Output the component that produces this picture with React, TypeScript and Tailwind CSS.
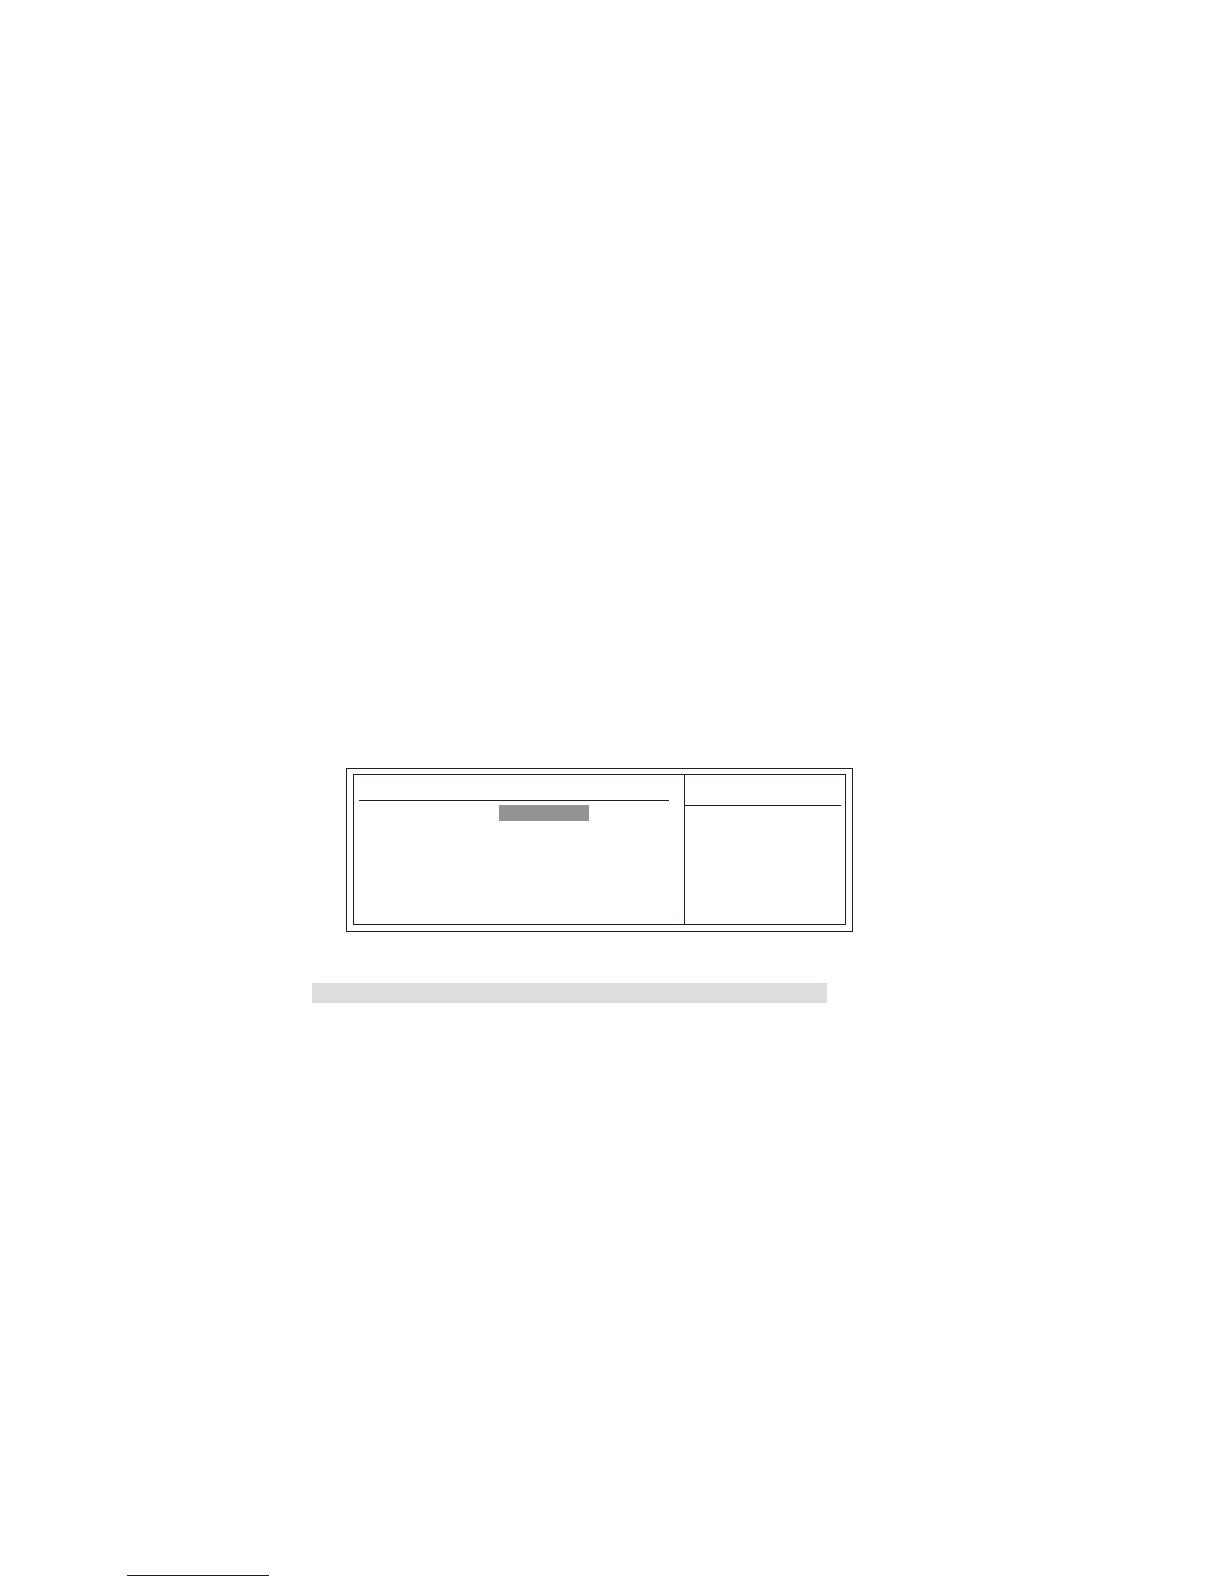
const SettingsColumn = () => (
    <section className="min-w-0 flex-1 pl-[5px] pr-[15px]">
        <div className="h-[26px] border-b border-[#231f20]" />
        {/* Highlighted value of the selected row */}
        <div className="mt-1 ml-[140px] h-4 w-[90px] bg-[#939495]" />
    </section>
);

const HelpColumn = () => (
    <aside className="w-[161px] shrink-0 border-l border-[#231f20] pr-1">
        <div className="h-[31px] border-b border-[#231f20]" />
    </aside>
);

const SetupPanel = () => (
    <div className="ml-[34px] max-w-[507px] border border-[#231f20] px-[6px] pt-[5px] pb-[6px]">
        <div className="flex min-h-[151px] border border-[#231f20]">
            <SettingsColumn />
            <HelpColumn />
        </div>
    </div>
);

export default function App() {
    return (
        <div className="flex min-h-screen flex-col bg-white">
            <main className="pt-[768px] pl-[312px]">
                <SetupPanel />
                <div className="mt-[51px] h-5 max-w-[515px] bg-[#dcdddd]" />
            </main>
            <footer className="mt-auto pb-2 pl-[127px]">
                <a href="#top" aria-label="Back to top" className="block h-4 w-[142px] border-b border-[#1010a0]" />
            </footer>
        </div>
    );
}
